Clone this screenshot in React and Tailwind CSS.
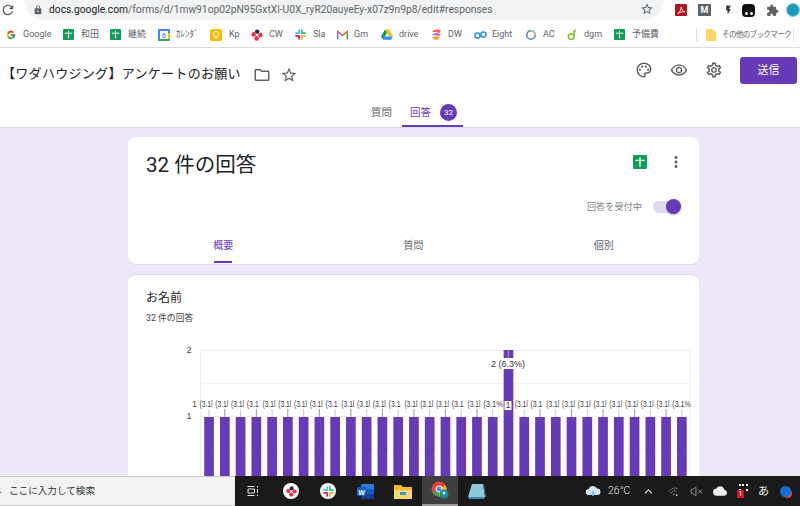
import React from "react";
import { FcGoogle } from "react-icons/fc";
import { VolumeX } from "lucide-react";
import { MdRefresh, MdLock, MdStarBorder, MdOutlineFolder, MdOutlinePalette, MdOutlineRemoveRedEye, MdOutlineSettings, MdMoreVert, MdExtension, MdFlashOn, MdKeyboardArrowUp, MdCloud, MdSearch } from "react-icons/md";

const sans = "font-['Roboto','Noto_Sans_CJK_JP',sans-serif]";

function Sheet({ className = "w-[11px] h-[11px]" }) {
  return (
    <svg viewBox="0 0 12 12" className={className}>
      <rect width="12" height="12" rx="1" fill="#0f9d58" />
      <path d="M2 4.6h8M6 2v8" stroke="#fff" strokeWidth="1.1" />
    </svg>
  );
}
function Cal() {
  return (
    <svg viewBox="0 0 12 12" className="w-[12px] h-[12px]">
      <rect width="12" height="12" rx="1" fill="#4285f4" />
      <rect x="2" y="2" width="8" height="8" fill="#fff" />
      <path d="M0 10h10v2H1z" fill="#34a853" />
      <path d="M10 4h2v6h-2z" fill="#fbbc04" />
      <text x="6" y="9" fontSize="7" textAnchor="middle" fill="#1a73e8" fontFamily="Roboto">6</text>
    </svg>
  );
}
function Keep() {
  return (
    <svg viewBox="0 0 12 12" className="w-[12px] h-[12px]">
      <rect width="12" height="12" rx="1.5" fill="#fbbc04" />
      <circle cx="6" cy="5" r="2.6" fill="none" stroke="#fff" strokeWidth="1" />
      <path d="M4.5 9h3" stroke="#fff" strokeWidth="1" />
    </svg>
  );
}
function Dots({ className = "w-[12px] h-[12px]" }) {
  return (
    <svg viewBox="0 0 12 12" className={className}>
      <circle cx="6.2" cy="2.6" r="2.2" fill="#1f2a44" />
      <circle cx="2.6" cy="5.4" r="2.3" fill="#f0304a" />
      <circle cx="9.4" cy="6" r="2.3" fill="#f0304a" />
      <circle cx="5.6" cy="9.4" r="2.3" fill="#f0304a" />
    </svg>
  );
}
function Slack({ className = "w-[11px] h-[11px]" }) {
  return (
    <svg viewBox="0 0 12 12" className={className}>
      <path d="M4.5 1v3.5M1 4.5h3" stroke="#36c5f0" strokeWidth="1.8" strokeLinecap="round" />
      <path d="M11 4.5H7.5M7.5 1v3" stroke="#2eb67d" strokeWidth="1.8" strokeLinecap="round" />
      <path d="M7.5 11V7.5M11 7.5H8" stroke="#ecb22e" strokeWidth="1.8" strokeLinecap="round" />
      <path d="M1 7.5h3.5M4.5 11V8" stroke="#e01e5a" strokeWidth="1.8" strokeLinecap="round" />
    </svg>
  );
}
function Gmail() {
  return (
    <svg viewBox="0 0 12 10" className="w-[11px] h-[10px]">
      <path d="M.5 9.5V1L6 5.5 11.5 1v8.5" fill="none" stroke="#ea4335" strokeWidth="1.5" />
      <path d="M.7 9.5V2.5" stroke="#4285f4" strokeWidth="1.5" />
      <path d="M11.3 9.5V2.5" stroke="#34a853" strokeWidth="1.5" />
      <path d="M10 2.2 11.5 1v2" fill="#fbbc04" />
    </svg>
  );
}
function Drive() {
  return (
    <svg viewBox="0 0 12 11" className="w-[12px] h-[11px]">
      <path d="M4 .5h4l4 7H8z" fill="#fbbc04" />
      <path d="M4 .5 0 7.5l2 3.2L6 4z" fill="#0f9d58" />
      <path d="M2 10.7h8l2-3.2H4z" fill="#4285f4" />
    </svg>
  );
}
function DW() {
  return (
    <svg viewBox="0 0 12 12" className="w-[12px] h-[12px]">
      <path d="M2 3c2-3 7-3 9-1L9 4C7 3 4 3 2 3z" fill="#ef6a5a" />
      <path d="M1 6c3-2 7-2 10-1L9 7C6 6 4 6 1 6z" fill="#b865c8" />
      <path d="M2 8c3-1 6-1 8 0l-3 3H5z" fill="#f4a13c" />
    </svg>
  );
}
function Eight() {
  return (
    <svg viewBox="0 0 13 8" className="w-[13px] h-[8px]">
      <circle cx="3.5" cy="4.5" r="2.6" fill="none" stroke="#2f8fe8" strokeWidth="1.5" />
      <circle cx="9.5" cy="3.5" r="2.6" fill="none" stroke="#2f8fe8" strokeWidth="1.5" />
    </svg>
  );
}
function AC() {
  return (
    <svg viewBox="0 0 12 12" className="w-[12px] h-[12px]">
      <circle cx="6" cy="6" r="4.3" fill="none" stroke="#5c8fa5" strokeWidth="1.6" />
      <path d="M6 1.7A4.3 4.3 0 0 1 10.3 6" fill="none" stroke="#b9c98a" strokeWidth="1.6" />
    </svg>
  );
}
function Dgm() {
  return (
    <svg viewBox="0 0 10 12" className="w-[10px] h-[12px]">
      <circle cx="4.2" cy="7.6" r="2.8" fill="none" stroke="#8cc63f" strokeWidth="1.8" />
      <path d="M7 8V2.5L9 1" fill="none" stroke="#8cc63f" strokeWidth="1.8" />
    </svg>
  );
}

const bookmarks = [
  { w: "w-[57px]", icon: <FcGoogle className="w-[10px] h-[10px]" />, gap: "mr-[7px]", label: "Google" },
  { w: "w-[47px]", icon: <Sheet />, gap: "mr-[7px]", label: "和田" },
  { w: "w-[48px]", icon: <Sheet />, gap: "mr-[7px]", label: "継続" },
  { w: "w-[52px]", icon: <Cal />, gap: "mr-[6px]", label: "ｶﾚﾝﾀﾞ" },
  { w: "w-[41px]", icon: <Keep />, gap: "mr-[7px]", label: "Kp" },
  { w: "w-[44px]", icon: <Dots />, gap: "mr-[6px]", label: "CW" },
  { w: "w-[42px]", icon: <Slack />, gap: "mr-[7px]", label: "Sla" },
  { w: "w-[44px]", icon: <Gmail />, gap: "mr-[6px]", label: "Gm" },
  { w: "w-[49px]", icon: <Drive />, gap: "mr-[6px]", label: "drive" },
  { w: "w-[44px]", icon: <DW />, gap: "mr-[6px]", label: "DW" },
  { w: "w-[51px]", icon: <Eight />, gap: "mr-[5px]", label: "Eight" },
  { w: "w-[42px]", icon: <AC />, gap: "mr-[6px]", label: "AC" },
  { w: "w-[47px]", icon: <Dgm />, gap: "mr-[7px]", label: "dgm" },
  { w: "w-[82px]", icon: <Sheet />, gap: "mr-[7px]", label: "予備費" },
];

function AddressBar() {
  return (
    <div className="flex items-center h-[22px] shrink-0 bg-white overflow-hidden">
      <MdRefresh className="ml-[0px] -mt-[2px] w-[16px] h-[16px] text-[#5f6368]" />
      <div className="ml-[8px] w-[640px] h-[40px] -mt-[22px] rounded-full bg-[#f1f3f4] flex items-end pb-[4px] shrink-0">
        <MdLock className="ml-[9px] w-[10px] h-[10px] text-[#5f6368] mb-[1px]" />
        <div className="ml-[6px] w-[592px] text-[10.25px] leading-[13px] whitespace-nowrap text-[#5f6368]">
          <span className="text-[#202124]">docs.google.com</span>/forms/d/1mw91op02pN95GxtXl-U0X_ryR20auyeEy-x07z9n9p8/edit#responses
        </div>
        <MdStarBorder className="-ml-[1px] w-[14px] h-[14px] text-[#5f6368]" />
      </div>
      <div className="ml-[11px] -mt-[2px] w-[12px] h-[12px] rounded-[1px] bg-[#b3131b] flex items-center justify-center shrink-0">
        <svg viewBox="0 0 10 10" className="w-[9px] h-[9px]"><path d="M1 8.5C3 7 5 3 4.6 1c.4 3 2 5 4.4 5.5C6 6 3 7 1 8.5z" fill="none" stroke="#fff" strokeWidth="1" /></svg>
      </div>
      <div className="ml-[11px] -mt-[2px] w-[13px] h-[12px] bg-[#5f6368] flex items-center justify-center text-white text-[9px] font-bold leading-none shrink-0">M</div>
      <MdFlashOn className="ml-[12px] -mt-[2px] w-[11px] h-[12px] text-[#333] shrink-0" />
      <div className="ml-[8px] -mt-[2px] w-[13px] h-[13px] rounded-[4px] bg-[#111] flex items-end justify-center gap-[2px] pb-[2px] shrink-0">
        <span className="w-[3px] h-[3px] bg-white rounded-full" />
        <span className="w-[3px] h-[3px] bg-white rounded-full" />
      </div>
      <MdExtension className="ml-[11px] -mt-[2px] w-[13px] h-[13px] text-[#5f6368] shrink-0" />
      <div className="ml-[7px] -mt-[2px] w-[14px] h-[14px] rounded-full bg-[#1c9ab8] border border-[#7fd0e8] shrink-0" />
    </div>
  );
}

function BookmarkBar() {
  return (
    <div className="flex items-center h-[26px] pl-[6px] shrink-0 bg-white border-b border-[#dadce0] text-[9px] text-[#5f6368] leading-none whitespace-nowrap">
      {bookmarks.map((b) => (
        <div key={b.label} className={`flex items-center shrink-0 ${b.w}`}>
          <span className={`flex items-center ${b.gap}`}>{b.icon}</span>
          <span>{b.label}</span>
        </div>
      ))}
      <div className="w-px h-[12px] bg-[#dadce0] shrink-0" />
      <svg viewBox="0 0 10 12" className="ml-[9px] w-[10px] h-[12px] shrink-0"><path d="M0 1a1 1 0 0 1 1-1h5l4 3v8a1 1 0 0 1-1 1H1a1 1 0 0 1-1-1z" fill="#fdd663" /></svg>
      <span className="ml-[6px] w-[69px] shrink-0 text-[7.6px] tracking-[-0.7px]">その他のブックマーク</span>
      <div className="ml-[2px] w-px h-[12px] bg-[#dadce0] shrink-0" />
    </div>
  );
}

function FormHeader() {
  return (
    <div className="h-[80px] shrink-0 bg-white border-b border-[#dadce0] flex flex-col">
      <div className="flex items-start pl-[2px] pr-[3px] pt-[9px] h-[50px]">
        <div className="mt-[8px] text-[13px] leading-[18px] text-[#202124] w-[239px] whitespace-nowrap tracking-[0.3px]">【ワダハウジング】アンケートのお願い</div>
        <MdOutlineFolder className="ml-[12px] mt-[9px] w-[18px] h-[18px] text-[#5f6368]" />
        <MdStarBorder className="ml-[9px] mt-[9px] w-[18px] h-[18px] text-[#5f6368]" />
        <div className="ml-auto flex items-start">
          <MdOutlinePalette className="mt-[4px] w-[18px] h-[18px] text-[#5f6368]" />
          <MdOutlineRemoveRedEye className="ml-[17px] mt-[4px] w-[18px] h-[18px] text-[#5f6368]" />
          <MdOutlineSettings className="ml-[17px] mt-[4px] w-[18px] h-[18px] text-[#5f6368]" />
          <button className="ml-[17px] w-[57px] h-[27px] rounded-[3px] bg-[#673ab7] text-white text-[11px] leading-none flex items-center justify-center">送信</button>
        </div>
      </div>
      <div className="flex-1 flex items-end pl-[371px] text-[10.5px]">
        <div className="h-[29px] pt-[8px] w-[31px] text-[#5f6368] leading-[14px]">質問</div>
        <div className="h-[29px] w-[61px] pl-[8px] flex items-start pt-[8px] border-b-2 border-[#673ab7] text-[#673ab7] leading-[14px]">
          <span>回答</span>
          <span className="ml-[9px] -mt-[2px] w-[17px] h-[17px] rounded-full bg-[#673ab7] text-white text-[8px] flex items-center justify-center">32</span>
        </div>
      </div>
    </div>
  );
}

function SummaryCard() {
  return (
    <div className="w-[571px] h-[127px] bg-white rounded-[8px] shadow-[0_1px_0_#dfd9ea] flex flex-col">
      <div className="flex items-start h-[52px] pl-[18px] pt-[15px]">
        <div className="text-[20.5px] leading-[26px] text-[#202124] whitespace-nowrap">32 件の回答</div>
        <div className="ml-auto flex items-center pr-[14px] pt-[1px]">
          <Sheet className="w-[14px] h-[14px]" />
          <MdMoreVert className="ml-[20px] w-[18px] h-[18px] text-[#5f6368]" />
        </div>
      </div>
      <div className="flex items-center justify-end h-[30px] pr-[18px] pt-[6px]">
        <span className="text-[9.2px] text-[#80868b] mr-[11px] leading-none">回答を受付中</span>
        <div className="relative w-[27px] h-[12px] rounded-full bg-[#e1d8f1] mr-[1px]">
          <div className="absolute -right-[1px] -top-[2px] w-[15px] h-[15px] rounded-full bg-[#673ab7] shadow-[0_1px_2px_rgba(0,0,0,0.3)]" />
        </div>
      </div>
      <div className="flex-1 grid grid-cols-3 text-[10px] text-[#5f6368] leading-none">
        <div className="relative text-center text-[#673ab7] pt-[22px]">
          概要
          <div className="absolute bottom-[1px] left-1/2 -translate-x-1/2 w-[18px] h-[2px] bg-[#673ab7]" />
        </div>
        <div className="text-center pt-[22px]">質問</div>
        <div className="text-center pt-[22px]">個別</div>
      </div>
    </div>
  );
}

const labelKinds = ["(3.1l", "(3.1l", "(3.1l", "(3.1", "(3.1l", "(3.1l", "(3.1l", "(3.1l", "(3.1", "(3.1l", "(3.1l", "(3.1l", "(3.1", "(3.1l", "(3.1l", "(3.1l", "(3.1", "(3.1l", "(3.1%", "", "(3.1l", "(3.1", "(3.1l", "(3.1l", "(3.1l", "(3.1l", "(3.1l", "(3.1l", "(3.1l", "(3.1l", "(3.1%"];

function Chart() {
  const bars = Array.from({ length: 31 }, (_, i) => 204.2 + i * 15.76);
  return (
    <svg viewBox="128 330 571 150" className="block w-[571px] h-[150px]" fontFamily="Arial, 'Liberation Sans', sans-serif">
      <path d="M200.5 350V480M200 350.5H690M690 350V480" stroke="#eeeeee" fill="none" />
      <path d="M200 383.5H690M200 416.5H690M200 449.5H690" stroke="#f5f5f5" fill="none" />
      <text x="189" y="353" fontSize="9" textAnchor="middle" fill="#444">2</text>
      <text x="189" y="419" fontSize="9" textAnchor="middle" fill="#444">1</text>
      {bars.map((x, i) => (
        <rect key={i} x={x} y={i === 19 ? 350 : 417} width="9.7" height={i === 19 ? 130 : 63} fill="#673ab7" />
      ))}
      {bars.map((x, i) => {
        if (i === 19) return null;
        const wide = labelKinds[i] === "(3.1%";
        const length = wide ? (i === 30 ? 18.5 : 20) : labelKinds[i] === "(3.1" ? 12 : 13;
        return (
          <g key={i}>
            <text x={x - 4.7} y="407" fontSize="9" fill="#3c4043" textLength={length} lengthAdjust="spacingAndGlyphs">{labelKinds[i]}</text>
            <line x1={x + 4.85} x2={x + 4.85} y1="409" y2="417" stroke={i % 2 ? "#999999" : "#cccccc"} />
          </g>
        );
      })}
      <text x="192" y="407" fontSize="9" fill="#5a4a2a">1</text>
      <rect x="504.5" y="401" width="7" height="9" fill="#fff" />
      <text x="505.5" y="407.5" fontSize="9" fill="#3c4043">1</text>
      <line x1="508.3" x2="508.3" y1="350" y2="358" stroke="#aaaaaa" />
      <rect x="503" y="358" width="11" height="11" fill="#fff" />
      <text x="508" y="367" fontSize="9" textAnchor="middle" fill="#333">2 (6.3%)</text>
    </svg>
  );
}

function QuestionCard() {
  return (
    <div className="w-[571px] mt-[10px] bg-white rounded-t-[8px] border-t border-[#dcd6e8]">
      <div className="pl-[18px] pt-[15px] h-[55px]">
        <div className="text-[12px] leading-[16px] text-[#202124]">お名前</div>
        <div className="mt-[6px] text-[8.8px] leading-[12px] text-[#3c4043]">32 件の回答</div>
      </div>
      <Chart />
    </div>
  );
}

function Taskbar() {
  return (
    <div className="h-[30px] shrink-0 flex bg-[#1a1a1a] text-white items-stretch">
      <div className="relative w-[235px] bg-[#f2f2f2] border-y border-[#c9c9c9] flex items-center pl-[9px] text-[9.6px] text-[#333] whitespace-nowrap">
        <MdSearch className="absolute -left-[9px] top-[6px] w-[12px] h-[12px] text-[#555]" />
        ここに入力して検索
      </div>
      <div className="flex items-center pl-[12px] flex-1">
        <svg viewBox="0 0 12 12" className="w-[12px] h-[12px]"><path d="M.5 1.5h7M.5 10.5h7M1 4h6.5v4H1zM10.5 1v1.5M10.5 4v4M10.5 9.5V11" fill="none" stroke="#e8e8e8" strokeWidth="1" /></svg>
        <div className="ml-[24px] w-[16px] h-[16px] rounded-full bg-white flex items-center justify-center"><Dots className="w-[11px] h-[11px]" /></div>
        <div className="ml-[21px] w-[16px] h-[16px] rounded-full bg-white flex items-center justify-center"><Slack className="w-[11px] h-[11px]" /></div>
        <svg viewBox="0 0 17 15" className="ml-[21px] w-[17px] h-[15px]">
          <rect x="4" width="13" height="15" rx="1" fill="#2b7cd3" />
          <rect x="4" y="10" width="13" height="5" fill="#103f91" />
          <rect x="4" y="5" width="13" height="5" fill="#185abd" />
          <rect y="3" width="9" height="9" rx="1" fill="#185abd" />
          <text x="4.5" y="10.5" fontSize="7" textAnchor="middle" fill="#fff" fontWeight="bold" fontFamily="Liberation Sans">W</text>
        </svg>
        <svg viewBox="0 0 18 15" className="ml-[20px] w-[18px] h-[15px]">
          <path d="M0 1h7l2 2h9v12H0z" fill="#f5b82e" />
          <path d="M0 6h18v9H0z" fill="#fcd771" />
          <rect x="6" y="8" width="6" height="3" fill="#2f9ad8" />
        </svg>
        <div className="ml-[10px] w-[36px] h-full bg-[#3f3f3f] border-b-2 border-[#9a9a9a] flex items-center justify-center">
          <svg viewBox="0 0 18 18" className="w-[18px] h-[18px]">
            <circle cx="8" cy="8" r="7.5" fill="#ea4335" />
            <path d="M8 8 1.5 11.8A7.5 7.5 0 0 0 8 15.5z" fill="#34a853" />
            <path d="M8 8l6.5-3.7A7.5 7.5 0 0 1 8 15.5z" fill="#fbbc04" />
            <circle cx="8" cy="8" r="3" fill="#4285f4" stroke="#fff" />
            <circle cx="13" cy="13" r="4.5" fill="#1a8a9a" />
            <circle cx="13" cy="12" r="1.5" fill="#bfeef5" />
          </svg>
        </div>
        <svg viewBox="0 0 18 17" className="ml-[10px] w-[18px] h-[17px]">
          <path d="M4 1h11l2 13H0z" fill="#8fc9dc" />
          <path d="M15 1l2 13h1L16 1z" fill="#6b6b6b" />
          <path d="M0 14h17l-1 2H1z" fill="#3d8a9e" />
        </svg>
        <div className="ml-auto flex items-center">
          <svg viewBox="0 0 16 12" className="w-[16px] h-[12px]">
            <path d="M4 10a3 3 0 0 1-.4-6A4.5 4.5 0 0 1 12 3.6 3.2 3.2 0 0 1 12.5 10z" fill="#cfe6f8" />
            <path d="M8 6v5M6.5 9.5 8 11l1.5-1.5" stroke="#3f9be0" fill="none" />
          </svg>
          <span className="ml-[7px] text-[10.5px] text-[#e8e8e8] w-[24px] whitespace-nowrap font-light">26°C</span>
          <MdKeyboardArrowUp className="ml-[9px] w-[15px] h-[15px] text-[#cfcfcf]" />
          <svg viewBox="0 0 12 12" className="ml-[12px] w-[11px] h-[11px]"><path d="M1 6a8 8 0 0 1 10-3M3 8a5 5 0 0 1 6-2.5M5 10a2.5 2.5 0 0 1 3-1" fill="none" stroke="#b5b5b5" strokeDasharray="1.5 .7" /><circle cx="9.5" cy="10" r="1" fill="#b5b5b5" /></svg>
          <VolumeX strokeWidth={1.2} className="ml-[11px] w-[13px] h-[13px] text-[#cfcfcf]" />
          <MdCloud className="ml-[10px] w-[14px] h-[14px] text-[#eeeeee]" />
          <div className="ml-[10px] relative w-[13px] h-[14px]">
            <span className="absolute left-[2px] top-0 w-[9px] h-[7px] border-t-[2px] border-x-[2px] border-dotted border-white" />
            <span className="absolute left-0 bottom-0 w-[7px] h-[8px] bg-[#d3112a] text-white text-[7px] leading-[8px] text-center">1</span>
          </div>
          <span className="ml-[8px] text-[11px] text-[#f0f0f0] leading-none">あ</span>
          <div className="ml-[11px] mr-[9px] w-[11px] h-[11px] rounded-full bg-[#1a6fd6] shadow-[2px_2px_0_-1px_#e0522a]" />
        </div>
      </div>
    </div>
  );
}

export default function App() {
  return (
    <div className={`w-[800px] h-[506px] overflow-hidden flex flex-col bg-[#ede7f6] ${sans}`}>
      <AddressBar />
      <BookmarkBar />
      <FormHeader />
      <div className="flex-1 min-h-0 overflow-hidden pl-[128px] pt-[9px]">
        <SummaryCard />
        <QuestionCard />
      </div>
      <Taskbar />
    </div>
  );
}
